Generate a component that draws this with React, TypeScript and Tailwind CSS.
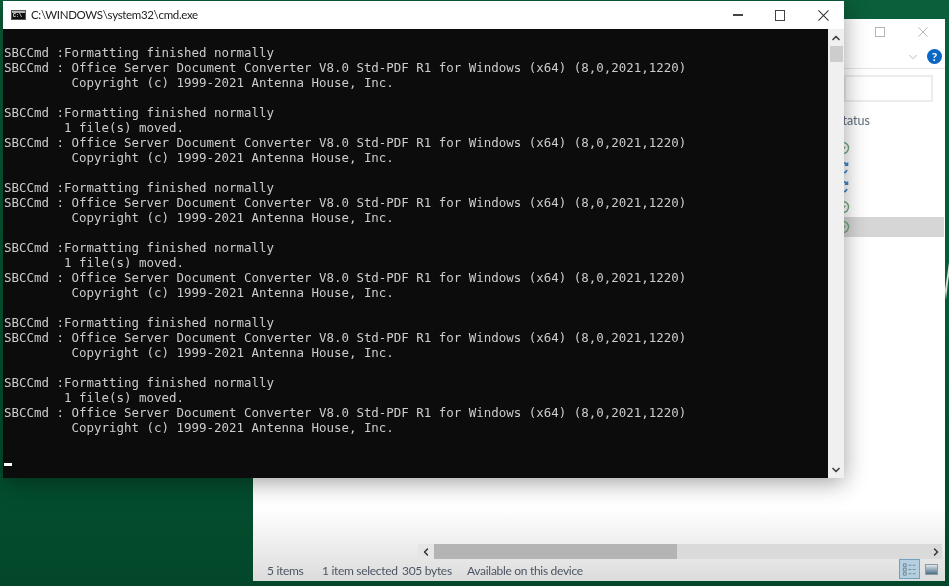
import {ChevronDown, ChevronLeft, ChevronRight, ChevronUp} from 'lucide-react';

const FINISHED = 'SBCCmd :Formatting finished normally';
const MOVED = '        1 file(s) moved.';
const BANNER = [
    'SBCCmd : Office Server Document Converter V8.0 Std-PDF R1 for Windows (x64) (8,0,2021,1220)',
    '         Copyright (c) 1999-2021 Antenna House, Inc.',
    '',
];

const OUTPUT = [
    FINISHED,
    ...BANNER,
    FINISHED,
    MOVED,
    ...BANNER,
    FINISHED,
    ...BANNER,
    FINISHED,
    MOVED,
    ...BANNER,
    FINISHED,
    ...BANNER,
    FINISHED,
    MOVED,
    ...BANNER,
].join('\n');

const StatusIcon = ({top}: {top: string}) => (
    <svg viewBox="0 0 14 14" className={`absolute left-[583px] h-[14px] w-[14px] text-[#6fa67a] ${top}`} fill="none" stroke="currentColor" strokeWidth="1.4">
        <circle cx="7" cy="7" r="5.5" />
        <path d="M4.8 7.2l1.6 1.6 3-3" />
    </svg>
);

const SyncIcon = ({top}: {top: string}) => (
    <svg viewBox="0 0 14 14" className={`absolute left-[583px] h-[14px] w-[14px] text-[#3f86c9] ${top}`} fill="none" stroke="currentColor" strokeWidth="1.8">
        <path d="M3 5a4.6 4.6 0 0 1 8-1.2M11 9a4.6 4.6 0 0 1-8 1.2" />
        <path d="M11.4 1.6v2.6H8.8M2.6 12.4V9.8h2.6" />
    </svg>
);

const ExplorerWindow = () => (
    <div className="absolute left-[253px] top-[19px] h-[562px] w-[692px] bg-white text-[12px] text-[#4b5563] [font-family:'Lato',sans-serif]">
        <svg viewBox="0 0 12 12" className="absolute left-[622px] top-[8px] h-[10px] w-[10px] text-[#a8a8a8]" fill="none" stroke="currentColor">
            <rect x="0.5" y="0.5" width="11" height="11" />
        </svg>
        <svg viewBox="0 0 12 12" className="absolute left-[665px] top-[8px] h-[10px] w-[10px] text-[#a8a8a8]" fill="none" stroke="currentColor">
            <path d="M0.5 0.5l11 11M11.5 0.5l-11 11" />
        </svg>
        <ChevronDown className="absolute left-[653px] top-[31px] h-[14px] w-[14px] text-[#b0b0b0]" strokeWidth={1.5} />
        <div className="absolute left-[674px] top-[30px] flex h-[15px] w-[15px] items-center justify-center rounded-full bg-[#0a67c4] text-[12px] font-bold leading-none text-white">?</div>
        <div className="absolute left-[591px] top-[49px] h-px w-[101px] bg-[#e6e6e6]" />
        <div className="absolute left-[591px] top-[56px] h-[27px] w-[89px] border-2 border-[#ececec]" />
        <div className="absolute left-[583px] top-[94px] text-[12.5px] leading-[16px] text-[#5f6b7d]">Status</div>
        <StatusIcon top="top-[122px]" />
        <SyncIcon top="top-[142px]" />
        <SyncIcon top="top-[161px]" />
        <StatusIcon top="top-[181px]" />
        <div className="absolute left-0 top-[198px] h-[20px] w-[691px] bg-[#d6d6d6]" />
        <StatusIcon top="top-[201px]" />
        <div className="absolute inset-x-0 bottom-0 h-[72px] bg-gradient-to-b from-white to-[#dcdcdc]" />
        <div className="absolute left-[165px] top-[525px] flex h-[15px] w-[524px] items-center bg-[#dadada]">
            <div className="flex h-full w-[16px] items-center justify-center bg-[#e6e6e6]">
                <ChevronLeft className="h-[12px] w-[12px] text-[#333333]" strokeWidth={3} />
            </div>
            <div className="h-full w-[243px] bg-[#b4b4b4]" />
            <div className="flex-1" />
            <ChevronRight className="h-[12px] w-[12px] text-[#333333]" strokeWidth={3} />
        </div>
        <div className="absolute left-[14px] top-[544px] flex items-center text-[12px] leading-[16px] tracking-[-0.3px]">
            <span className="w-[55px]">5 items</span>
            <span className="w-[80px] whitespace-nowrap">1 item selected</span>
            <span className="w-[65px] whitespace-nowrap">305 bytes</span>
            <span className="whitespace-nowrap">Available on this device</span>
        </div>
        <div className="absolute left-[646px] top-[540px] flex h-[20px] w-[21px] items-center justify-center border border-[#6fa3bd] bg-[#b4d0e0]">
            <svg viewBox="0 0 16 16" className="h-[15px] w-[15px] text-[#6f8594]" fill="none" stroke="currentColor">
                <path d="M1.5 2h3v3h-3zM1.5 6.5h3v3h-3zM1.5 11h3v3h-3zM7 3.5h3M11.5 3.5h3M7 8h3M11.5 8h3M7 12.5h3M11.5 12.5h3" />
            </svg>
        </div>
        <div className="absolute left-[672px] top-[545px] h-[11px] w-[13px] border border-[#8a9aa5] bg-gradient-to-b from-[#dfe8ee] to-[#4d6f85]" />
    </div>
);

const CmdIcon = () => (
    <div className="h-[10px] w-[15px] border border-[#555555] bg-[#111111]">
        <div className="h-[2px] w-full bg-[#b5b5b5]" />
        <div className="ml-px mt-px text-[5px] font-bold leading-[5px] text-white [font-family:'Liberation_Mono',monospace]">C:\</div>
    </div>
);

const CmdWindow = () => (
    <div className="absolute left-[3px] top-px flex h-[477px] w-[841px] flex-col bg-white shadow-[0_4px_22px_rgba(0,0,0,0.38)]">
        <div className="flex h-[28px] shrink-0 items-center bg-white pl-[8px]">
            <CmdIcon />
            <span className="ml-[5px] text-[11.5px] tracking-[-0.33px] text-[#222222] [font-family:'Lato',sans-serif]">C:\WINDOWS\system32\cmd.exe</span>
            <div className="ml-auto flex items-center text-[#333333]">
                <div className="mr-[32px] h-[1.5px] w-[10px] bg-[#444444]" />
                <div className="mr-[33px] h-[11px] w-[10px] border-[1.5px] border-[#444444]" />
                <svg viewBox="0 0 12 12" className="mr-[15px] h-[11px] w-[11px]" fill="none" stroke="currentColor" strokeWidth="1.1">
                    <path d="M0.5 0.5l11 11M11.5 0.5l-11 11" />
                </svg>
            </div>
        </div>
        <div className="flex min-h-0 flex-1">
            <pre className="min-w-0 flex-1 overflow-hidden bg-[#0c0c0c] pl-px pt-[16px] text-[12.46px] leading-[15px] text-[#cccccc] [font-family:'DejaVu_Sans_Mono','Liberation_Mono',monospace]">
                {OUTPUT}
                <div className="mt-[28px] h-[3px] w-[8px] bg-white" />
            </pre>
            <div className="flex w-[16px] shrink-0 flex-col items-center bg-[#f0f0f0]">
                <ChevronUp className="mt-[3px] h-[12px] w-[12px] text-[#444444]" strokeWidth={3.5} />
                <div className="ml-px mt-[2px] h-[16px] w-[13px] bg-[#cdcdcd]" />
                <ChevronDown className="mb-[2px] mt-auto h-[12px] w-[12px] text-[#444444]" strokeWidth={3.5} />
            </div>
        </div>
    </div>
);

export default function App() {
    return (
        <div className="relative h-[586px] w-[949px] overflow-hidden bg-gradient-to-b from-[#0b5f3a] via-[#045a35] to-[#03472a] blur-[0.4px]">
            <ExplorerWindow />
            <CmdWindow />
            <svg viewBox="0 0 4 40" className="absolute left-[945px] top-[262px] h-[40px] w-[4px] text-[#d5ded9]" fill="currentColor">
                <path d="M4 0L0 28l1 10L3 20l1-6z" />
            </svg>
        </div>
    );
}
